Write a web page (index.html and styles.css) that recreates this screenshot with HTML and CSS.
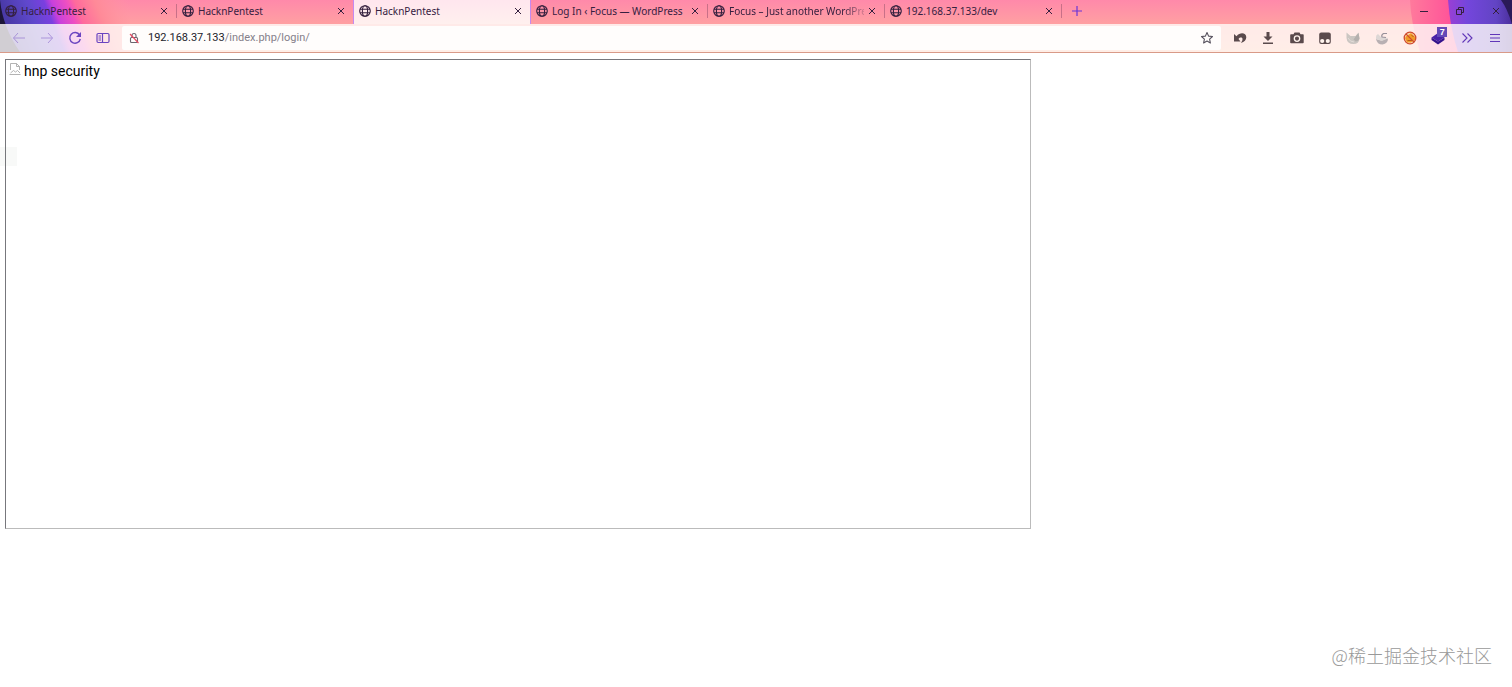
FILE: index.html
```
<!DOCTYPE html>
<html lang="zh">
<head>
<meta charset="UTF-8">
<title>HacknPentest</title>
<link rel="stylesheet" href="styles.css">
</head>
<body>

<!-- shared icons -->
<svg class="sprite" aria-hidden="true">
  <symbol id="globe" viewBox="0 0 12 12">
    <g fill="none" stroke="currentColor" stroke-width="1.1">
      <circle cx="6" cy="6" r="5.3"/>
      <ellipse cx="6" cy="6" rx="2.6" ry="5.3"/>
      <path d="M1 4.2h10M1 7.8h10"/>
    </g>
  </symbol>
  <symbol id="close" viewBox="0 0 8 8">
    <path d="M1 1l6 6M7 1L1 7" fill="none" stroke="currentColor" stroke-width="1"/>
  </symbol>
</svg>

<header class="browser">
  <svg class="theme theme-left" viewBox="0 0 130 52" preserveAspectRatio="none" aria-hidden="true">
    <defs>
      <linearGradient id="leftTheme" gradientUnits="userSpaceOnUse" x1="0" y1="0" x2="110" y2="-44">
        <stop offset="0" stop-color="#4a3aa8"/>
        <stop offset="0.2" stop-color="#5f48cc"/>
        <stop offset="0.34" stop-color="#7a3fe0"/>
        <stop offset="0.4" stop-color="#c840dc"/>
        <stop offset="0.52" stop-color="#f050c0"/>
        <stop offset="0.58" stop-color="#ff6a9c"/>
        <stop offset="0.74" stop-color="#ff8a98"/>
        <stop offset="1" stop-color="#ff98a0" stop-opacity="0"/>
      </linearGradient>
    </defs>
    <path d="M0 0H130V52H0z" fill="url(#leftTheme)"/>
    <path d="M0 0Q3 28 20 52H0z" fill="#1c1538"/>
  </svg>
  <svg class="theme theme-right" viewBox="0 0 130 52" preserveAspectRatio="none" aria-hidden="true">
    <defs>
      <linearGradient id="rightPink" x1="0" x2="0.5" y1="0" y2="0">
        <stop offset="0" stop-color="#ff7a9c"/>
        <stop offset="1" stop-color="#ff4a98"/>
      </linearGradient>
      <linearGradient id="rightPurple" x1="0" x2="1" y1="0" y2="0">
        <stop offset="0" stop-color="#9a3fd4"/>
        <stop offset="0.3" stop-color="#7446dc"/>
        <stop offset="0.75" stop-color="#6244c4"/>
        <stop offset="1" stop-color="#4b2f9c"/>
      </linearGradient>
    </defs>
    <path d="M28 0Q29 24 38 52H130V0z" fill="url(#rightPink)"/>
    <path d="M66 0Q68 28 76 52H130V0z" fill="url(#rightPurple)"/>
    <path d="M119 0Q125 8 130 24V0z" fill="#2a1a58"/>
  </svg>

  <div class="tab-bar">
    <nav class="tabs" aria-label="Tabs">
      <div class="tab">
        <svg class="favicon"><use href="#globe"/></svg>
        <a class="tab-title" href="#">HacknPentest</a>
        <button class="tab-close" aria-label="Close tab"><svg><use href="#close"/></svg></button>
      </div>
      <div class="tab">
        <svg class="favicon"><use href="#globe"/></svg>
        <a class="tab-title" href="#">HacknPentest</a>
        <button class="tab-close" aria-label="Close tab"><svg><use href="#close"/></svg></button>
      </div>
      <div class="tab active">
        <svg class="favicon"><use href="#globe"/></svg>
        <a class="tab-title" href="#" aria-current="page">HacknPentest</a>
        <button class="tab-close" aria-label="Close tab"><svg><use href="#close"/></svg></button>
      </div>
      <div class="tab">
        <svg class="favicon"><use href="#globe"/></svg>
        <a class="tab-title" href="#">Log In ‹ Focus — WordPress</a>
        <button class="tab-close" aria-label="Close tab"><svg><use href="#close"/></svg></button>
      </div>
      <div class="tab">
        <svg class="favicon"><use href="#globe"/></svg>
        <a class="tab-title fade" href="#">Focus – Just another WordPre</a>
        <button class="tab-close" aria-label="Close tab"><svg><use href="#close"/></svg></button>
      </div>
      <div class="tab">
        <svg class="favicon"><use href="#globe"/></svg>
        <a class="tab-title" href="#">192.168.37.133/dev</a>
        <button class="tab-close" aria-label="Close tab"><svg><use href="#close"/></svg></button>
      </div>
      <button class="new-tab" aria-label="New tab">
        <svg viewBox="0 0 10 10"><path d="M5 0v10M0 5h10" stroke="currentColor" stroke-width="1.2"/></svg>
      </button>
    </nav>
    <div class="window-buttons">
      <button aria-label="Minimize"><svg viewBox="0 0 8 8"><path d="M0 4.500h8" stroke="currentColor"/></svg></button>
      <button aria-label="Restore"><svg viewBox="0 0 8 8"><path d="M.5 2.500h5v5h-5zM2.500 2.500v-2h5v5h-2" fill="none" stroke="currentColor"/></svg></button>
      <button aria-label="Close window"><svg><use href="#close"/></svg></button>
    </div>
  </div>

  <div class="toolbar">
    <div class="nav-buttons">
      <button class="dim" aria-label="Back"><svg viewBox="0 0 16 16"><path d="M14 8H2.500M7 3L2.500 8L7 13" fill="none" stroke="currentColor"/></svg></button>
      <button class="dim" aria-label="Forward"><svg viewBox="0 0 16 16"><path d="M2 8h11.500M9 3l4.500 5L9 13" fill="none" stroke="currentColor"/></svg></button>
      <button aria-label="Reload"><svg viewBox="0 0 16 16"><path d="M12.600 5A5.300 5.300 0 1 0 13.300 9" fill="none" stroke="currentColor" stroke-width="1.400"/><path d="M14 2v5H9z" fill="currentColor"/></svg></button>
      <button aria-label="Sidebar"><svg viewBox="0 0 16 16"><rect x="2" y="3.500" width="12" height="9" rx="1.200" fill="none" stroke="currentColor" stroke-width="1.200"/><path d="M7.500 3.500v9" stroke="currentColor" stroke-width="1.200"/><path d="M3.500 6H6M3.500 8H6M3.500 10H6" stroke="currentColor"/></svg></button>
    </div>

    <div class="url-bar">
      <svg class="lock" viewBox="0 0 12 12" aria-hidden="true">
        <rect x="2.500" y="5.500" width="7" height="5" rx="1" fill="none" stroke="#6b6670" stroke-width="1.100"/>
        <path d="M4 5.500V3.500a2 2 0 0 1 4 0v2" fill="none" stroke="#6b6670" stroke-width="1.100"/>
        <path d="M2 2l8.500 9" stroke="#e84860" stroke-width="1.100"/>
      </svg>
      <a class="url" href="#">192.168.37.133<span>/index.php/login/</span></a>
      <button class="star" aria-label="Bookmark"><svg viewBox="0 0 14 14"><path d="M7 1.500l1.600 3.600 3.900.4-2.900 2.600.8 3.900L7 10l-3.400 2 .8-3.900L1.500 5.500l3.900-.4z" fill="none" stroke="currentColor" stroke-width="1.100" stroke-linejoin="round"/></svg></button>
    </div>

    <div class="extensions">
      <button aria-label="Undo"><svg viewBox="0 0 16 16"><path d="M2 4v7.500h6.500L6.500 9C8 7 10.300 7.300 10.500 9c.1 1.500-.6 2.500-1.700 4C12.500 12 14.300 9.500 14.300 7.200c0-4.200-5.800-5.700-9.800-1z" fill="currentColor"/></svg></button>
      <button aria-label="Downloads"><svg viewBox="0 0 16 16"><path d="M6.500 2h3v4.500H12.500L8 11 3.500 6.500h3zM3 12.500h10V14H3z" fill="currentColor"/></svg></button>
      <button aria-label="Screenshot"><svg viewBox="0 0 16 16"><path d="M5.500 2.500h5l1 1.700H14q.7 0 .7.800v7.500q0 .8-.8.800H2q-.8 0-.8-.8V5q0-.8.8-.8h2.500z" fill="currentColor"/><circle cx="8" cy="8.600" r="2.700" fill="none" stroke="#fff4ee" stroke-width="1.300"/></svg></button>
      <button aria-label="Tampermonkey"><svg viewBox="0 0 16 16"><rect x="2.200" y="2.500" width="11.600" height="11.500" rx="2" fill="currentColor"/><circle cx="5.200" cy="11" r="2.100" fill="#fff4ee"/><circle cx="10.800" cy="11" r="2.100" fill="#fff4ee"/></svg></button>
      <button aria-label="FoxyProxy"><svg viewBox="0 0 16 16"><path d="M1.500 2.500l4 3.500h5l3-3.500 1 6q-.5 5.500-6 5.500-6.500 0-7-6z" fill="#cbc6c2"/><path d="M5.500 6l3 3.500 2.500-3.500 2.500-3 1 5.500q-1 3-4 3z" fill="#b4b0ae"/><path d="M3 8q2 4 6 4" fill="none" stroke="#e2dcd8"/></svg></button>
      <button aria-label="Proxy switch"><svg viewBox="0 0 16 16"><path d="M2 9l5 1.500L14 8.500q0 5-5.500 6-5.500 0-6.500-5.500z" fill="#b8b0b2"/><path d="M2 7q0-2 2-3l3 3 7 1-6 3-6-2z" fill="#ddd7d5"/><path d="M13 3.500H9.500Q7 5 8 7l4 .5" fill="none" stroke="#99919a" stroke-width="1.200"/></svg></button>
      <button aria-label="Cookies blocked"><svg viewBox="0 0 16 16"><circle cx="8" cy="8" r="5.500" fill="#fbd9b8"/><path d="M3 8q1-3 4-3.500l2-1.500 2 2q3 2 2 5l-4 2.500H5z" fill="#f09a28"/><path d="M5.500 10.500h5M9.500 5l2 2" stroke="#b45a18"/><circle cx="8" cy="8" r="5.800" fill="none" stroke="#cf4b2c" stroke-width="1.300"/><path d="M3.900 3.900l8.200 8.200" stroke="#cf4b2c" stroke-width="1.300"/></svg></button>
      <button class="layers" aria-label="Wappalyzer"><svg viewBox="0 0 16 16"><path d="M8 3l6.500 4.500L8 11.500 1.500 7.500z" fill="#4a20a8"/><path d="M1.500 7.500L8 11.500l6.500-4V10L8 14.500 1.500 10z" fill="#34128c"/></svg><span class="badge">7</span></button>
      <button class="violet" aria-label="More tools"><svg viewBox="0 0 16 16"><path d="M3.500 3.500L8 8l-4.500 4.500M8.500 3.500L13 8l-4.500 4.500" fill="none" stroke="currentColor" stroke-width="1.100"/></svg></button>
      <button class="violet" aria-label="Menu"><svg viewBox="0 0 16 16"><path d="M3 4.500h10M3 8h10M3 11.500h10" stroke="currentColor" stroke-width="1.100"/></svg></button>
    </div>
  </div>
</header>

<main class="page">
  <div class="frame">
    <svg class="broken" viewBox="0 0 12 12" aria-hidden="true">
      <path d="M1.500 7V.5h6l3 3V7M7.500.5v3h3M.5 11.500h11M1.500 10l3-2.500 2 1.500 2-1.500 2.500 2.500" fill="none" stroke="#aaa" stroke-width=".9"/>
    </svg>
    <span>hnp security</span>
  </div>
  <div class="side-handle"></div>
  <div class="watermark">@稀土掘金技术社区</div>
</main>

</body>
</html>
```
FILE: styles.css
```
* {
  box-sizing: border-box;
}
body {
  font-family: "Noto Sans", "Noto Sans CJK SC", sans-serif;
  background-color: #fff;
  color: #000;
  margin: 0;
  min-height: 100vh;
  display: flex;
  flex-direction: column;
}
a {
  color: inherit;
  text-decoration: none;
}
button {
  display: flex;
  align-items: center;
  justify-content: center;
  background: none;
  color: inherit;
  border: none;
  padding: 0;
}
svg {
  display: block;
}
.sprite {
  position: absolute;
  width: 0;
  height: 0;
}

/* browser window */
.browser {
  position: relative;
  background: linear-gradient(#ff89aa, #ffa0a2 24px, #ffb49c);
  border-bottom: 1px solid #d99a88;
}
.theme {
  position: absolute;
  top: 0;
  width: 130px;
  height: 100%;
}
.theme-left {
  left: 0;
}
.theme-right {
  right: 0;
}
.tab-bar {
  position: relative;
  display: flex;
  justify-content: space-between;
  height: 24px;
  color: #35203f;
}
.tabs {
  display: flex;
  flex: 1;
  min-width: 0;
}
.tab {
  display: flex;
  align-items: center;
  gap: 4px;
  flex: 0 1 177px;
  min-width: 0;
  padding: 0 9px 3px 5px;
  background: linear-gradient(#c87088, #c87088) right 4px / 1px 14px no-repeat;
}
.tab.active {
  background: linear-gradient(#ffe6ee, #fff0ee);
  box-shadow: -1px 0 #c58af0;
  border-right: 1px solid #c58af0;
  padding-right: 8px;
  z-index: 1;
}
.favicon {
  width: 12px;
  height: 12px;
  flex: none;
}
.tab-title {
  flex: 1;
  min-width: 0;
  font-size: 10px;
  line-height: 16px;
  white-space: nowrap;
}
.tab-title.fade {
  mask-image: linear-gradient(to right, #000 84%, rgba(0, 0, 0, 0.2));
}
.tab-close svg {
  width: 8px;
  height: 8px;
}
.new-tab {
  width: 30px;
  padding-bottom: 3px;
  color: #6a35d8;
}
.new-tab svg {
  width: 10px;
  height: 10px;
}
.window-buttons {
  display: flex;
}
.window-buttons button {
  width: 36px;
  padding: 0 0 2px 4px;
}
.window-buttons svg {
  width: 8px;
  height: 8px;
}

/* toolbar */
.toolbar {
  position: relative;
  display: flex;
  align-items: center;
  height: 28px;
  padding: 0 9px 0 11px;
  background-color: rgba(255, 252, 250, 0.8);
}
.toolbar button svg {
  width: 16px;
  height: 16px;
}
.nav-buttons {
  display: flex;
  gap: 12px;
  color: #6b45c0;
}
.dim {
  opacity: 0.45;
}
.url-bar {
  display: flex;
  align-items: center;
  flex: 1;
  min-width: 0;
  height: 24px;
  margin: 0 11px;
  padding: 0 7px 0 6px;
  border-radius: 2px;
  background-color: #fffdfc;
}
.lock {
  width: 12px;
  height: 12px;
  margin-right: 8px;
}
.url {
  flex: 1;
  font-family: Roboto, sans-serif;
  font-size: 11px;
  line-height: 16px;
  color: #221c2b;
}
.url span {
  color: #85808a;
}
.toolbar .star svg {
  width: 14px;
  height: 14px;
}
.star {
  color: #55505c;
}
.extensions {
  display: flex;
  justify-content: space-between;
  flex: 0 0 271px;
  color: #5a4a4c;
}
.violet {
  color: #6136b8;
}
.layers {
  position: relative;
}
.badge {
  position: absolute;
  top: -3px;
  right: -1px;
  width: 10px;
  height: 10px;
  background-color: #6548b8;
  color: #fff;
  font-size: 9px;
  font-weight: bold;
  line-height: 10px;
}

/* page content */
.page {
  position: relative;
  flex: 1;
  padding: 6px 5px;
}
.frame {
  display: flex;
  align-items: flex-start;
  gap: 3px;
  width: 1026px;
  max-width: 100%;
  height: 470px;
  padding: 2px 3px;
  border: 1px solid;
  border-color: #77777c #bbb #bbb #77777c;
  font-family: Roboto, sans-serif;
  font-size: 14px;
  line-height: 18px;
}
.broken {
  width: 12px;
  height: 12px;
  margin-top: 1px;
}
.side-handle {
  position: absolute;
  left: 0;
  top: 94px;
  width: 17px;
  height: 19px;
  background-color: rgba(120, 130, 120, 0.05);
}
.watermark {
  position: absolute;
  right: 20px;
  bottom: 19px;
  font-family: "Noto Sans CJK SC", sans-serif;
  font-size: 18px;
  font-weight: 300;
  line-height: 26px;
  color: #999;
}
```
